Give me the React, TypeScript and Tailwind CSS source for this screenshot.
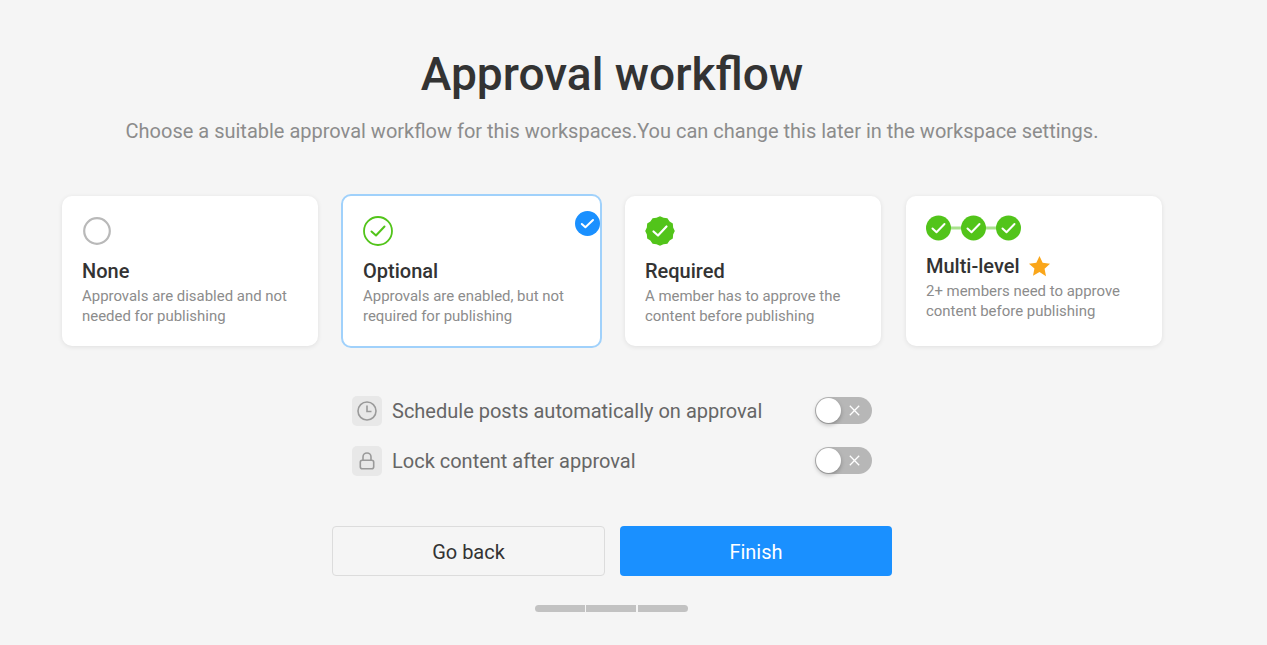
import React from "react";

const Check = ({ d = "M7 12.5l3.4 3.4L17 9", w = 2, c = "#fff" }: { d?: string; w?: number; c?: string }) => (
  <path d={d} fill="none" stroke={c} strokeWidth={w} strokeLinecap="round" strokeLinejoin="round" />
);

function badgePath() {
  const pts: string[] = [];
  const n = 24;
  for (let i = 0; i < n; i++) {
    const a = (i / n) * Math.PI * 2;
    const r = i % 2 ? 13.6 : 14.8;
    pts.push(`${(15 + r * Math.cos(a)).toFixed(2)},${(15 + r * Math.sin(a)).toFixed(2)}`);
  }
  return pts.join(" ");
}

const Card = ({
  icon,
  title,
  desc,
  selected,
  multi,
  star,
}: {
  icon: React.ReactNode;
  title: string;
  desc: string[];
  selected?: boolean;
  multi?: boolean;
  star?: boolean;
}) => (
  <div
    className={
      selected
        ? "relative w-[261px] h-[154px] bg-white rounded-[10px] border-[2.5px] border-[#a0d1fb] pl-[20px] pt-[20px]"
        : "w-[256px] h-[150px] bg-white rounded-[10px] shadow-[0_1px_5px_rgba(0,0,0,0.09)] pl-[20px] " +
          (multi ? "pt-[17px]" : "pt-[20px]")
    }
  >
    {selected && (
      <svg className="absolute top-[15px] right-[0px]" width="25" height="25" viewBox="0 0 25 25">
        <circle cx="12.5" cy="12.5" r="12.5" fill="#1a90ff" />
        <Check d="M6.800 13l3.600 3.300L18 9" w={2} />
      </svg>
    )}
    <div className="h-[30px] flex items-center">{icon}</div>
    <div
      className={
        "flex items-center text-[20px] leading-[26px] font-medium text-[#333333] " + (multi ? "mt-[10px]" : "mt-[12px]")
      }
    >
      {title}
      {star && (
        <svg className="ml-[8px]" width="23" height="22" viewBox="0 0 24 23">
          <path
            d="M12 1l3.3 7.2 7.7.9-5.7 5.3 1.5 7.7L12 17.9l-6.800 3.9 1.500-7.700L1 9.100l7.700-.9z"
            fill="#faa61a"
          />
        </svg>
      )}
    </div>
    <div className="mt-[2px] text-[14.950px] leading-[20px] text-[#8c8c8c]">
      {desc.map((l) => (
        <div key={l}>{l}</div>
      ))}
    </div>
  </div>
);

const Toggle = () => (
  <div className="relative mb-[2px] w-[57px] h-[27px] rounded-full bg-[#b7b7b7] flex items-center justify-end pr-[12px]">
    <div className="absolute left-[1px] top-[1px] w-[25px] h-[25px] rounded-full bg-white shadow-[0_2px_4px_rgba(0,0,0,0.25)]" />
    <svg width="11" height="11" viewBox="0 0 11 11">
      <path d="M0.800 0.800l9.400 9.400M10.200 0.800l-9.400 9.400" stroke="#fff" strokeWidth="1.300" />
    </svg>
  </div>
);

const Opt = ({ icon, label }: { icon: React.ReactNode; label: string }) => (
  <div className="w-[520px] h-[30px] flex items-center justify-between">
    <div className="flex items-center gap-[10px]">
      <div className="w-[30px] h-[30px] rounded-[5px] bg-[#e8e8e8] flex items-center justify-center">{icon}</div>
      <span className="text-[20px] leading-[30px] text-[#666666]">{label}</span>
    </div>
    <Toggle />
  </div>
);

export default function App() {
  return (
    <div
      className="w-[1267px] h-[645px] overflow-hidden bg-[#f5f5f5] flex flex-col items-center pr-[43px]"
      style={{ fontFamily: "Roboto, sans-serif" }}
    >
      <h1 className="mt-[45px] text-[46.100px] leading-[58px] font-medium text-[#333333]">Approval workflow</h1>
      <p className="mt-[13px] text-[20px] leading-[30px] text-[#8c8c8c]">
        Choose a suitable approval workflow for this workspaces.You can change this later in the workspace settings.
      </p>
      <div className="mt-[48px] w-[1100px] h-[154px] flex items-center">
        <Card
          title="None"
          desc={["Approvals are disabled and not", "needed for publishing"]}
          icon={
            <svg className="ml-[1px]" width="28" height="28" viewBox="0 0 28 28">
              <circle cx="14" cy="14" r="12.800" fill="none" stroke="#b9b9b9" strokeWidth="2.200" />
            </svg>
          }
        />
        <div className="w-[23px]" />
        <Card
          selected
          title="Optional"
          desc={["Approvals are enabled, but not", "required for publishing"]}
          icon={
            <svg width="30" height="30" viewBox="0 0 30 30">
              <circle cx="15" cy="15" r="14" fill="none" stroke="#52c41a" strokeWidth="1.800" />
              <Check d="M8.500 15.500l4.500 4L21.500 10.500" w={2} c="#52c41a" />
            </svg>
          }
        />
        <div className="w-[23px]" />
        <Card
          title="Required"
          desc={["A member has to approve the", "content before publishing"]}
          icon={
            <svg width="30" height="30" viewBox="0 0 30 30">
              <polygon points={badgePath()} fill="#52c41a" />
              <Check d="M8.500 15.500l4.500 4L21.500 10.500" w={2.200} />
            </svg>
          }
        />
        <div className="w-[25px]" />
        <Card
          multi
          star
          title="Multi-level"
          desc={["2+ members need to approve", "content before publishing"]}
          icon={
            <svg width="96" height="26" viewBox="0 0 96 26">
              <line x1="20" y1="13" x2="80" y2="13" stroke="#a9e28d" strokeWidth="3" />
              {[12.500, 47.500, 82.500].map((x) => (
                <g key={x} transform={`translate(${x - 12.500} 0.500)`}>
                  <circle cx="12.500" cy="12.500" r="12.500" fill="#52c41a" />
                  <Check d="M6.500 13l4 3.700 8-8.200" w={2} />
                </g>
              ))}
            </svg>
          }
        />
      </div>
      <div className="mt-[48px] flex flex-col gap-[20px]">
        <Opt
          label="Schedule posts automatically on approval"
          icon={
            <svg width="22" height="22" viewBox="0 0 22 22" fill="none" stroke="#9a9a9a" strokeWidth="1.600">
              <circle cx="11" cy="11" r="9" />
              <path d="M11 5.500V11.500h4.500" />
            </svg>
          }
        />
        <Opt
          label="Lock content after approval"
          icon={
            <svg width="16" height="18" viewBox="0 0 16 18" fill="none" stroke="#9a9a9a" strokeWidth="1.600">
              <rect x="1.300" y="8.300" width="13.400" height="8.400" rx="2" />
              <path d="M4 8V5a4 4 0 0 1 8 0v3" />
            </svg>
          }
        />
      </div>
      <div className="mt-[50px] flex gap-[15px]">
        <button className="w-[273px] h-[50px] pt-[2px] rounded-[4px] border border-[#dcdcdc] bg-[#f5f5f5] text-[20px] text-[#333333]">
          Go back
        </button>
        <button className="w-[272px] h-[50px] pt-[2px] rounded-[4px] bg-[#1a90ff] text-[20px] text-white">Finish</button>
      </div>
      <div className="mt-[29px] mr-[1px] flex rounded-full overflow-hidden">
        <div className="w-[50px] h-[7px] bg-[#c2c2c2]" />
        <div className="w-[50px] h-[7px] ml-[1px] bg-[#c2c2c2]" />
        <div className="w-[50px] h-[7px] ml-[2px] bg-[#c2c2c2]" />
      </div>
    </div>
  );
}
